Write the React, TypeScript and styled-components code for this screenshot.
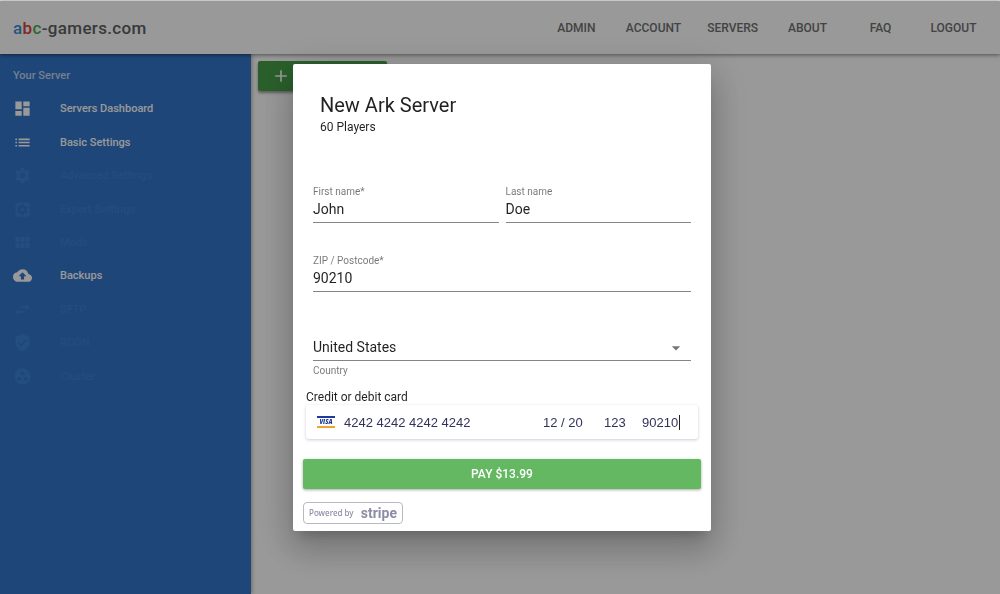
import React from "react";
import styled, { createGlobalStyle } from "styled-components";
import {
  MdAdd,
  MdArrowDropDown,
  MdCloudUpload,
  MdDashboard,
  MdGroupWork,
  MdList,
  MdSettings,
  MdSettingsApplications,
  MdSwapHoriz,
  MdVerifiedUser,
  MdViewModule,
} from "react-icons/md";
import type { IconType } from "react-icons";

const GlobalStyle = createGlobalStyle`
  *, *::before, *::after { box-sizing: border-box; }
  body {
    margin: 0;
    background: #fff;
    color: rgba(0, 0, 0, 0.87);
    font-family: Roboto, "Liberation Sans", sans-serif;
    font-size: 12px;
  }
  button, input, select { font: inherit; color: inherit; }
`;

const Page = styled.div`
  display: flex;
  flex-direction: column;
  min-height: 100vh;
  border-top: 1px solid #dfe3e1;
`;

const Header = styled.header`
  display: flex;
  align-items: center;
  justify-content: space-between;
  height: 53px;
  padding: 0 10px 0 13px;
  background: #fff;
  box-shadow: 0 1px 4px rgba(0, 0, 0, 0.5);
  position: relative;
`;

const Logo = styled.a`
  color: #606060;
  font-size: 17px;
  font-weight: 500;
  letter-spacing: 0.02em;
  text-decoration: none;
`;

const Tint = styled.span<{ $color: string }>`
  color: ${({ $color }) => $color};
`;

const Nav = styled.nav`
  display: flex;
`;

const NavLink = styled.a`
  min-width: 73px;
  padding: 0 13px;
  color: #707070;
  font-size: 12px;
  font-weight: 500;
  line-height: 30px;
  text-align: center;
  text-decoration: none;
`;

const Body = styled.div`
  display: flex;
  flex: 1;
`;

const Sidebar = styled.aside`
  width: 251px;
  flex: none;
  background: #3476ca;
  color: #fff;
  box-shadow: 1px 0 4px rgba(0, 0, 0, 0.3);
`;

const SidebarTitle = styled.h2`
  margin: 0;
  padding: 12px 13px 6px;
  color: rgba(255, 255, 255, 0.7);
  font-size: 11px;
  font-weight: 500;
  line-height: 20px;
`;

const Menu = styled.ul`
  display: grid;
  grid-auto-rows: 1fr;
  height: 301px;
  margin: 0;
  padding: 0;
  list-style: none;
`;

const MenuLink = styled.a<{ $disabled?: boolean }>`
  display: grid;
  grid-template-columns: 47px 1fr;
  align-items: center;
  height: 100%;
  padding: 0 13px;
  color: ${({ $disabled }) => ($disabled ? "#3d80cf" : "#fff")};
  font-size: 11px;
  font-weight: 500;
  text-decoration: none;

  svg {
    width: 19px;
    height: 19px;
    fill: ${({ $disabled }) => ($disabled ? "#3d82d0" : "#fff")};
  }
`;

const Main = styled.main`
  flex: 1;
  padding: 7px;
`;

const AddButton = styled.button`
  display: flex;
  align-items: center;
  width: 129px;
  height: 30px;
  padding: 0 13px;
  border: 0;
  border-radius: 2px;
  background: #469f48;
  color: #fff;
  box-shadow: 0 2px 3px rgba(0, 0, 0, 0.4);
`;

const Backdrop = styled.div`
  position: fixed;
  inset: 1px 0 0;
  display: flex;
  align-items: center;
  justify-content: center;
  padding-left: 4px;
  background: rgba(0, 0, 0, 0.4);
`;

const Dialog = styled.form`
  width: 418px;
  padding: 27px 10px 7px;
  border-radius: 2px;
  background: #fff;
  box-shadow: 0 9px 12px -6px rgba(0, 0, 0, 0.2), 0 20px 32px 3px rgba(0, 0, 0, 0.14),
    0 8px 38px 7px rgba(0, 0, 0, 0.12);
`;

const DialogHeader = styled.header`
  padding: 0 17px;
`;

const Title = styled.h1`
  margin: 0;
  font-size: 20px;
  font-weight: 400;
  line-height: 28px;
`;

const Subtitle = styled.p`
  margin: 0;
  font-size: 12px;
  line-height: 16px;
`;

const Fields = styled.div`
  display: grid;
  grid-template-columns: 1fr 1fr;
  column-gap: 7px;
  row-gap: 31px;
  padding: 50px 10px 0;
`;

const Field = styled.div<{ $wide?: boolean }>`
  display: flex;
  flex-direction: column;
  grid-column: ${({ $wide }) => ($wide ? "1 / -1" : "auto")};
`;

const Label = styled.label`
  color: rgba(0, 0, 0, 0.54);
  font-size: 10px;
  line-height: 13px;
`;

const TextInput = styled.input`
  width: 100%;
  height: 25px;
  padding: 0 0 2px;
  border: 0;
  border-bottom: 1px solid rgba(0, 0, 0, 0.48);
  outline: 0;
  background: none;
  font-size: 14px;
`;

const SelectBox = styled.div`
  display: grid;
  align-items: center;
  margin-top: 11px;

  select {
    grid-area: 1 / 1;
    width: 100%;
    height: 27px;
    padding: 0;
    border: 0;
    border-bottom: 1px solid rgba(0, 0, 0, 0.48);
    appearance: none;
    background: none;
    font-size: 14px;
  }

  svg {
    grid-area: 1 / 1;
    justify-self: end;
    width: 20px;
    height: 20px;
    margin-right: 5px;
    fill: rgba(0, 0, 0, 0.54);
    pointer-events: none;
  }
`;

const CountryLabel = styled(Label)`
  margin-top: 3px;
`;

const CardLabel = styled.label`
  display: block;
  padding: 12px 3px 0;
  font-size: 12px;
  line-height: 16px;
`;

const CardRow = styled.div`
  display: flex;
  align-items: center;
  height: 34px;
  margin: 0 3px;
  padding: 0 18px 0 11px;
  border-radius: 3px;
  box-shadow: 0 1px 3px rgba(50, 50, 93, 0.25);

  svg {
    flex: none;
    width: 18px;
    height: 12px;
    margin-right: 9px;
  }
`;

const CardInput = styled.input<{ $width?: number }>`
  flex: ${({ $width }) => ($width ? "none" : "1")};
  width: ${({ $width }) => ($width ? `${$width}px` : "auto")};
  min-width: 0;
  padding: 0;
  border: 0;
  outline: 0;
  background: none;
  color: #32325d;
  font-family: "Liberation Sans", Arial, sans-serif;
  font-size: 13px;

  & + & {
    margin-left: 16px;
  }
`;

const Caret = styled.span`
  width: 1px;
  height: 15px;
  background: #222;
`;

const PayButton = styled.button`
  display: block;
  width: 100%;
  height: 30px;
  margin-top: 20px;
  border: 0;
  border-radius: 2px;
  background: #65b862;
  color: #fff;
  font-size: 12px;
  font-weight: 500;
  box-shadow: 0 1px 3px rgba(0, 0, 0, 0.35);
`;

const StripeBadge = styled.a`
  display: flex;
  align-items: center;
  justify-content: space-between;
  width: 100px;
  height: 22px;
  margin-top: 13px;
  padding: 0 5px;
  border: 1px solid #b9b9c6;
  border-radius: 4px;
  color: #8c8ca6;
  font-family: "Noto Sans", "Open Sans", sans-serif;
  font-size: 8px;
  font-weight: 500;
  line-height: 16px;
  text-decoration: none;

  strong {
    font-family: Roboto, sans-serif;
    font-size: 14px;
    font-weight: 700;
  }
`;

const VisaMark = () => (
  <svg viewBox="0 0 18 12" aria-label="Visa" role="img">
    <rect width="18" height="2" fill="#1f3a9c" />
    <rect y="10" width="18" height="2" fill="#f2a32c" />
    <text
      x="9"
      y="8"
      textAnchor="middle"
      fontFamily="Open Sans, sans-serif"
      fontSize="6"
      fontWeight="800"
      fontStyle="italic"
      fill="#1f3a9c"
    >
      VISA
    </text>
  </svg>
);

const navItems = ["ADMIN", "ACCOUNT", "SERVERS", "ABOUT", "FAQ", "LOGOUT"];

const menuItems: { label: string; icon: IconType; disabled?: boolean }[] = [
  { label: "Servers Dashboard", icon: MdDashboard },
  { label: "Basic Settings", icon: MdList },
  { label: "Advanced Settings", icon: MdSettings, disabled: true },
  { label: "Expert Settings", icon: MdSettingsApplications, disabled: true },
  { label: "Mods", icon: MdViewModule, disabled: true },
  { label: "Backups", icon: MdCloudUpload },
  { label: "SFTP", icon: MdSwapHoriz, disabled: true },
  { label: "RCON", icon: MdVerifiedUser, disabled: true },
  { label: "Cluster", icon: MdGroupWork, disabled: true },
];

export default function App() {
  return (
    <>
      <GlobalStyle />
      <Page>
        <Header>
          <Logo href="#">
            <Tint $color="#3d8fd8">a</Tint>
            <Tint $color="#d9433b">b</Tint>
            <Tint $color="#4caf50">c</Tint>-gamers.com
          </Logo>
          <Nav>
            {navItems.map((item) => (
              <NavLink href="#" key={item}>
                {item}
              </NavLink>
            ))}
          </Nav>
        </Header>
        <Body>
          <Sidebar>
            <SidebarTitle>Your Server</SidebarTitle>
            <Menu>
              {menuItems.map(({ label, icon: Icon, disabled }) => (
                <li key={label}>
                  <MenuLink href="#" $disabled={disabled} aria-disabled={disabled}>
                    <Icon />
                    {label}
                  </MenuLink>
                </li>
              ))}
            </Menu>
          </Sidebar>
          <Main>
            <AddButton type="button" aria-label="Add server">
              <MdAdd size={20} />
            </AddButton>
          </Main>
        </Body>
      </Page>
      <Backdrop>
        <Dialog role="dialog" aria-labelledby="dialog-title" onSubmit={(e) => e.preventDefault()}>
          <DialogHeader>
            <Title id="dialog-title">New Ark Server</Title>
            <Subtitle>60 Players</Subtitle>
          </DialogHeader>
          <Fields>
            <Field>
              <Label htmlFor="first">First name*</Label>
              <TextInput id="first" defaultValue="John" />
            </Field>
            <Field>
              <Label htmlFor="last">Last name</Label>
              <TextInput id="last" defaultValue="Doe" />
            </Field>
            <Field $wide>
              <Label htmlFor="zip">ZIP / Postcode*</Label>
              <TextInput id="zip" defaultValue="90210" />
            </Field>
            <Field $wide>
              <SelectBox>
                <select id="country" defaultValue="United States">
                  <option>United States</option>
                </select>
                <MdArrowDropDown />
              </SelectBox>
              <CountryLabel htmlFor="country">Country</CountryLabel>
            </Field>
          </Fields>
          <CardLabel htmlFor="card">Credit or debit card</CardLabel>
          <CardRow>
            <VisaMark />
            <CardInput id="card" defaultValue="4242 4242 4242 4242" />
            <CardInput $width={45} aria-label="Expiry date" defaultValue="12 / 20" />
            <CardInput $width={22} aria-label="CVC" defaultValue="123" />
            <CardInput $width={37} aria-label="Postcode" defaultValue="90210" />
            <Caret />
          </CardRow>
          <PayButton type="submit">PAY $13.99</PayButton>
          <StripeBadge href="#">
            Powered by <strong>stripe</strong>
          </StripeBadge>
        </Dialog>
      </Backdrop>
    </>
  );
}
